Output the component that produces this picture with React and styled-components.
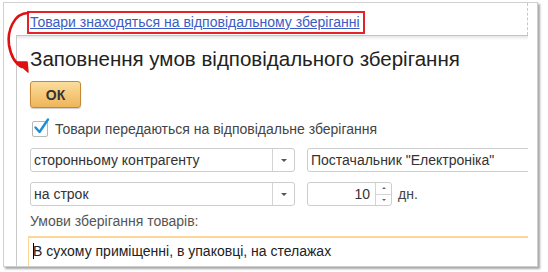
import React from 'react'
import styled, { createGlobalStyle } from 'styled-components'

const Global = createGlobalStyle`
  html, body { margin: 0; padding: 0; background: #fff; }
  body { font-family: "Liberation Sans", Arial, sans-serif; width: 548px; height: 272px; overflow: hidden; }
`

const Frame = styled.div`
  position: relative;
  margin: 2px 0 0 3px;
  width: 535px;
  height: 265px;
  border: 1px solid #d0d0d0;
  box-shadow: 2px 2px 2px rgba(0, 0, 0, 0.35);
  background: #fff;
  display: flex;
  flex-direction: column;
  padding-left: 12px;
  box-sizing: border-box;
  overflow: hidden;
`

const TopBar = styled.div`
  height: 32px;
  width: 512px;
  box-sizing: border-box;
  display: flex;
  align-items: flex-start;
  padding: 8px 0 0 11px;
  border-right: 1px dashed #c8c8c8;
`

const LinkBox = styled.div`
  border: 2px solid #e3222a;
  padding: 1px 3px 2px 1px;
  line-height: 16px;
`

const Link = styled.a`
  font-size: 14px;
  color: #3b5cc4;
  text-decoration: underline;
  white-space: nowrap;
`

const Panel = styled.div`
  flex: 1;
  width: 512px;
  border-top: 1px solid #c4c4c4;
  border-left: 1px solid #c8c8c8;
  background: linear-gradient(#e6e6e6, #fff 4px);
  padding: 11px 0 0 13px;
  box-sizing: border-box;
  overflow: hidden;
  display: flex;
  flex-direction: column;
`

const Title = styled.h1`
  margin: 0;
  font-weight: normal;
  font-size: 20.5px;
  line-height: 24px;
  color: #222;
  white-space: nowrap;
`

const OkButton = styled.button`
  margin-top: 10px;
  width: 51px;
  height: 27px;
  border: 1px solid #c38a33;
  border-radius: 3px;
  background: linear-gradient(#fbdd9c, #eeb55a);
  box-shadow: 0 1px 1px rgba(0, 0, 0, 0.2);
  font-family: inherit;
  font-weight: bold;
  font-size: 14px;
  color: #333;
  padding: 0;
  display: block;
`

const CheckRow = styled.label`
  margin-top: 13px;
  height: 16px;
  display: flex;
  align-items: center;
  gap: 7px;
  font-size: 14px;
  line-height: 16px;
  color: #444;
  padding-left: 2px;
`

const Box = styled.span`
  position: relative;
  width: 14px;
  height: 14px;
  border: 1px solid #b8b8b8;
  border-radius: 2px;
  background: #fff;
  flex: none;
`

const Row = styled.div`
  display: flex;
  align-items: center;
  gap: 12px;
  margin-top: ${(p) => p.$top}px;
  white-space: nowrap;
`

const Field = styled.div`
  display: flex;
  align-items: stretch;
  height: 24px;
  width: ${(p) => (p.$w ? `${p.$w}px` : 'auto')};
  flex: ${(p) => (p.$grow ? '0 0 240px' : 'none')};
  border: 1px solid #cdcdcd;
  border-radius: 3px;
  box-sizing: border-box;
  background: #fff;
  font-size: 14px;
  color: #333;
`

const FieldText = styled.div`
  flex: 1;
  display: flex;
  align-items: center;
  justify-content: ${(p) => (p.$right ? 'flex-end' : 'flex-start')};
  padding: 0 ${(p) => (p.$right ? '5px' : '3px')};
`

const DropBtn = styled.div`
  width: 21px;
  border-left: 1px solid #d4d4d4;
  display: flex;
  align-items: center;
  justify-content: center;
  &::after {
    content: '';
    border-left: 3px solid transparent;
    border-right: 3px solid transparent;
    border-top: 3px solid #555;
  }
`

const Spin = styled.div`
  width: 15px;
  border-left: 1px solid #d4d4d4;
  display: flex;
  flex-direction: column;
`

const SpinHalf = styled.div`
  flex: 1;
  display: flex;
  align-items: center;
  justify-content: center;
  & + & { border-top: 1px solid #d4d4d4; }
  &::after {
    content: '';
    border-left: 2px solid transparent;
    border-right: 2px solid transparent;
    ${(p) => (p.$up ? 'border-bottom: 2px solid #666;' : 'border-top: 2px solid #666;')}
  }
`

const Unit = styled.span`
  font-size: 14px;
  color: #444;
  margin-left: -6px;
`

const Label = styled.div`
  margin-top: 7px;
  font-size: 14px;
  line-height: 16px;
  color: #555;
`

const Memo = styled.div`
  margin: 7px 0 0 -2px;
  flex: 1;
  border-top: 2px solid #fdd79a;
  border-left: 1px solid #fdd79a;
  padding: 5px 0 0 4px;
  font-size: 14px;
  line-height: 16px;
  color: #222;
  white-space: nowrap;
`

const Caret = styled.span`
  display: inline-block;
  width: 1px;
  height: 16px;
  background: #000;
  vertical-align: -3px;
  margin-right: -1px;
`

const Arrow = styled.svg`
  position: absolute;
  left: 0;
  top: 0;
  pointer-events: none;
`

export default function App() {
  return (
    <>
      <Global />
      <Frame>
        <TopBar>
          <LinkBox>
            <Link>Товари знаходяться на відповідальному зберіганні</Link>
          </LinkBox>
        </TopBar>
        <Panel>
          <Title>Заповнення умов відповідального зберігання</Title>
          <OkButton>ОК</OkButton>
          <CheckRow>
            <Box>
              <svg width="18" height="18" viewBox="0 0 18 18" style={{ position: 'absolute', left: 0, top: -5 }}>
                <path d="M2.5 10.5 L6.5 15 L15 2.5" fill="none" stroke="#1a8fd8" strokeWidth="2.4" strokeLinecap="round" strokeLinejoin="round" />
              </svg>
            </Box>
            Товари передаються на відповідальне зберігання
          </CheckRow>
          <Row $top={11}>
            <Field $w={265}>
              <FieldText>сторонньому контрагенту</FieldText>
              <DropBtn />
            </Field>
            <Field $grow>
              <FieldText>Постачальник "Електроніка"</FieldText>
            </Field>
          </Row>
          <Row $top={10}>
            <Field $w={265}>
              <FieldText>на строк</FieldText>
              <DropBtn />
            </Field>
            <Field $w={85}>
              <FieldText $right>10</FieldText>
              <Spin>
                <SpinHalf $up />
                <SpinHalf />
              </Spin>
            </Field>
            <Unit>дн.</Unit>
          </Row>
          <Label>Умови зберігання товарів:</Label>
          <Memo>
            <Caret />В сухому приміщенні, в упаковці, на стелажах
          </Memo>
        </Panel>
        <Arrow width="40" height="80" viewBox="0 0 40 80">
          <path d="M24 10 C 10 10, 3 28, 5 42 C 7 54, 12 61, 18 64" fill="none" stroke="#e01010" strokeWidth="2.6" strokeLinecap="round" />
          <path d="M13 59 L24 69 L23 59 Z" fill="#e01010" stroke="#e01010" strokeWidth="1.5" strokeLinejoin="round" />
        </Arrow>
      </Frame>
    </>
  )
}
